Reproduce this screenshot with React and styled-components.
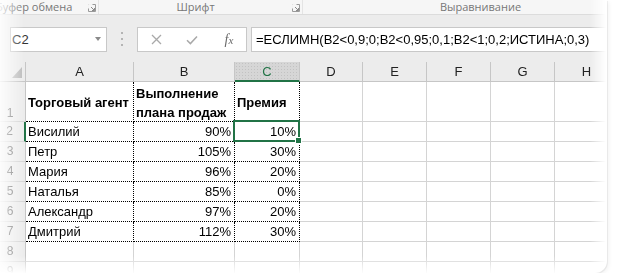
import styled, { createGlobalStyle } from "styled-components"

const GlobalStyle = createGlobalStyle`
  html, body { margin: 0; background: #fff; }
  body { font-family: "Liberation Sans", Arial, sans-serif; }
`

const columns = [
  { key: "A", width: 108 },
  { key: "B", width: 101 },
  { key: "C", width: 65 },
  { key: "D", width: 63 },
  { key: "E", width: 64 },
  { key: "F", width: 64 },
  { key: "G", width: 64 },
  { key: "H", width: 64 },
]

const data = [
  ["Висилий", "90%", "10%"],
  ["Петр", "105%", "30%"],
  ["Мария", "96%", "20%"],
  ["Наталья", "85%", "0%"],
  ["Александр", "97%", "20%"],
  ["Дмитрий", "112%", "30%"],
]

const FORMULA = "=ЕСЛИМН(B2<0,9;0;B2<0,95;0,1;B2<1;0,2;ИСТИНА;0,3)"

function Launcher() {
  return (
    <svg width="8" height="8" viewBox="0 0 8 8">
      <path d="M0.5 0.5h7v7h-7z" fill="none" stroke="#9a9a9a" strokeWidth="1" />
      <path d="M0.5 0.5h4M0.5 0.5v4" stroke="#f3f3f3" strokeWidth="1" />
      <path d="M3 3l3.5 3.5M6.5 4v2.5H4" fill="none" stroke="#8a8a8a" strokeWidth="1" />
    </svg>
  )
}

function CancelIcon() {
  return (
    <svg width="11" height="11" viewBox="0 0 11 11">
      <path d="M1 1l9 9M10 1l-9 9" stroke="#a9a9a9" strokeWidth="1.3" />
    </svg>
  )
}

function EnterIcon() {
  return (
    <svg width="12" height="10" viewBox="0 0 12 10">
      <path d="M1 5.2l3.4 3.4L11 1.5" fill="none" stroke="#a9a9a9" strokeWidth="1.5" />
    </svg>
  )
}

export default function App() {
  return (
    <>
      <GlobalStyle />
      <Frame>
        <Sheet>
          <RibbonBand>
            <Group $width={99}>
              <GroupLabel $first>Буфер обмена</GroupLabel>
              <Launcher />
            </Group>
            <Group $width={204}>
              <GroupLabel>Шрифт</GroupLabel>
              <Launcher />
            </Group>
            <Group $width={358}>
              <GroupLabel>Выравнивание</GroupLabel>
            </Group>
          </RibbonBand>

          <FormulaBar>
            <NameBox>
              <span>C2</span>
              <DropArrow />
            </NameBox>
            <Grip>
              <i /><i /><i />
            </Grip>
            <ButtonBox>
              <BarButton><CancelIcon /></BarButton>
              <BarButton><EnterIcon /></BarButton>
              <BarButton><Fx>f<small>x</small></Fx></BarButton>
            </ButtonBox>
            <FormulaInput>{FORMULA}</FormulaInput>
          </FormulaBar>

          <Grid>
            <Corner><SelectAll /></Corner>
            {columns.map(c => (
              <ColHeader key={c.key} $selected={c.key === "C"}>{c.key}</ColHeader>
            ))}

            <RowHeader $bottom>1</RowHeader>
            <Cell $dotted $bold $tall>Торговый агент</Cell>
            <Cell $dotted $bold $wrap $tall>Выполнение плана продаж</Cell>
            <Cell $dotted $bold $tall>Премия</Cell>
            {columns.slice(3).map(c => <Cell key={c.key} $tall />)}

            {data.map((row, i) => (
              <Row key={i} n={i + 2} row={row} />
            ))}

            {[8, 9].map(n => (
              <Row key={n} n={n} />
            ))}
          </Grid>
        </Sheet>
      </Frame>
    </>
  )
}

function Row({ n, row }) {
  return (
    <>
      <RowHeader $selected={n === 2}>{n}</RowHeader>
      {columns.map((c, j) => {
        const value = row ? row[j] : undefined
        const dotted = !!row && j < 3
        return (
          <Cell key={c.key} $dotted={dotted} $align={j > 0 && j < 3 ? "right" : "left"}>
            {value}
            {n === 2 && c.key === "C" && (
              <Selection>
                <FillHandle />
              </Selection>
            )}
          </Cell>
        )
      })}
    </>
  )
}

const Frame = styled.div`
  position: relative;
  width: 607px;
  height: 273px;
  border-radius: 0 0 12px 0;
  box-shadow: 1px 1px 0 rgba(0, 0, 0, 0.05), 2px 2px 4px rgba(0, 0, 0, 0.05);
  overflow: hidden;
  background: #fff;
`

const Sheet = styled.div`
  width: 100%;
  height: 100%;
  overflow: hidden;
  -webkit-mask-image: linear-gradient(to right, rgba(0,0,0,0.15) 0px, #000 24px, #000 590px, transparent 606px),
    linear-gradient(to bottom, #000 256px, transparent 274px);
  -webkit-mask-composite: source-in;
  mask-image: linear-gradient(to right, rgba(0,0,0,0.15) 0px, #000 24px, #000 590px, transparent 606px),
    linear-gradient(to bottom, #000 256px, transparent 274px);
  mask-composite: intersect;
`

const RibbonBand = styled.div`
  display: flex;
  height: 14px;
  background: #f6f6f6;
  border-bottom: 1px solid #dcdcdc;
  overflow: hidden;
`

const Group = styled.div`
  flex: 0 0 ${p => p.$width}px;
  box-sizing: border-box;
  display: flex;
  align-items: center;
  padding-right: 2px;
  border-right: 1px solid #e4e4e4;
  svg { flex: 0 0 auto; margin-top: 1px; }
`

const GroupLabel = styled.span`
  flex: 1;
  margin-left: ${p => (p.$first ? "-4px" : "0")};
  text-align: ${p => (p.$first ? "left" : "center")};
  font-family: "Open Sans", "Noto Sans", sans-serif;
  font-size: 11px;
  line-height: 14px;
  color: #777;
  white-space: nowrap;
`

const FormulaBar = styled.div`
  display: flex;
  align-items: flex-start;
  height: 35px;
  padding: 12px 0 0 10px;
  background: #ececec;
`

const boxed = `
  box-sizing: border-box;
  height: 25px;
  background: #fff;
  border: 1px solid #c8c8c8;
`

const NameBox = styled.div`
  ${boxed}
  flex: 0 0 97px;
  display: flex;
  align-items: center;
  justify-content: space-between;
  padding: 0 5px 0 1px;
  font-size: 13px;
  color: #333;
`

const DropArrow = styled.span`
  width: 0;
  height: 0;
  margin-top: -2px;
  border-left: 3.5px solid transparent;
  border-right: 3.5px solid transparent;
  border-top: 4px solid #8a8a8a;
`

const Grip = styled.div`
  flex: 0 0 3px;
  display: flex;
  flex-direction: column;
  gap: 4px;
  margin: 5px 13px 0 14px;
  i {
    display: block;
    width: 2px;
    height: 2px;
    background: #b4b4b4;
  }
`

const ButtonBox = styled.div`
  ${boxed}
  flex: 0 0 110px;
  display: flex;
`

const BarButton = styled.div`
  flex: 1;
  display: flex;
  align-items: center;
  justify-content: center;
`

const Fx = styled.span`
  font-family: "Liberation Serif", "Times New Roman", serif;
  font-style: italic;
  font-size: 14px;
  color: #6b6b6b;
  margin-left: 2px;
  small { font-size: 11px; }
`

const FormulaInput = styled.div`
  ${boxed}
  flex: 1;
  margin-left: 4px;
  border-right: none;
  padding-left: 4px;
  display: flex;
  align-items: center;
  font-size: 13px;
  color: #000;
  white-space: nowrap;
`

const Grid = styled.div`
  display: grid;
  grid-template-columns: 26px ${columns.map(c => c.width + "px").join(" ")};
  grid-template-rows: 20px 40px repeat(8, 20px);
  font-size: 13px;
`

const Corner = styled.div`
  box-sizing: border-box;
  background: #ececec;
  border-right: 1px solid #c6c6c6;
  border-bottom: 1px solid #c6c6c6;
  position: relative;
`

const SelectAll = styled.span`
  position: absolute;
  right: 3px;
  bottom: 3px;
  width: 0;
  height: 0;
  border-left: 10px solid transparent;
  border-bottom: 11px solid #bcbcbc;
`

const ColHeader = styled.div`
  box-sizing: border-box;
  display: flex;
  align-items: center;
  justify-content: center;
  background-color: ${p => (p.$selected ? "#d6d6d6" : "#ececec")};
  background-image: ${p =>
    p.$selected ? "radial-gradient(circle, #c2c2c2 0.6px, transparent 0.8px)" : "none"};
  background-size: 3px 3px;
  border-right: 1px solid #c6c6c6;
  border-bottom: ${p => (p.$selected ? "2px solid #217346" : "1px solid #c6c6c6")};
  padding-top: ${p => (p.$selected ? "1px" : "0")};
  color: ${p => (p.$selected ? "#217346" : "#222")};
  font-size: 13px;
`

const RowHeader = styled.div`
  box-sizing: border-box;
  display: flex;
  align-items: ${p => (p.$bottom ? "flex-end" : "center")};
  justify-content: center;
  padding: 0 5px 1px 0;
  background: #ececec;
  border-right: ${p => (p.$selected ? "2px solid #217346" : "1px solid #c6c6c6")};
  border-bottom: 1px solid #d4d4d4;
  color: #666;
  font-size: 12px;
`

const Cell = styled.div`
  box-sizing: border-box;
  position: relative;
  display: flex;
  align-items: center;
  justify-content: ${p => (p.$align === "right" ? "flex-end" : "flex-start")};
  padding: ${p => (p.$align === "right" ? "0 3px 0 0" : "0 0 0 2px")};
  border-right: 1px ${p => (p.$dotted ? "dotted #000" : "solid #d4d4d4")};
  border-bottom: 1px ${p => (p.$dotted ? "dotted #000" : "solid #d4d4d4")};
  font-weight: ${p => (p.$bold ? 700 : 400)};
  line-height: 19px;
  padding-top: ${p => (p.$tall ? "2px" : "0")};
  white-space: ${p => (p.$wrap ? "normal" : "nowrap")};
  color: #000;
`

const Selection = styled.span`
  position: absolute;
  left: -2px;
  top: -2px;
  width: 67px;
  height: 22px;
  box-sizing: border-box;
  border: 2px solid #217346;
  z-index: 2;
  pointer-events: none;
`

const FillHandle = styled.span`
  position: absolute;
  right: -4px;
  bottom: -4px;
  width: 5px;
  height: 5px;
  background: #217346;
  border: 1px solid #fff;
`
